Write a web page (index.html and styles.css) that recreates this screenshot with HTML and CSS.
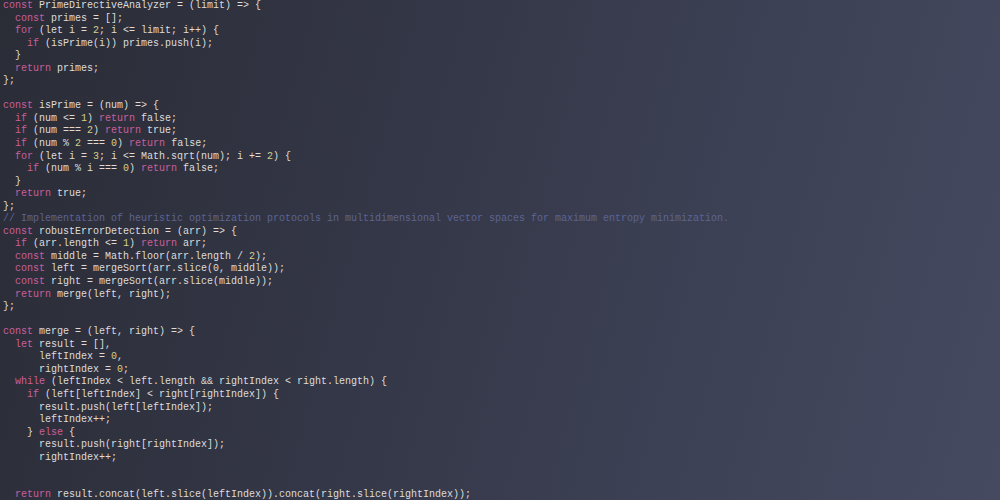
FILE: index.html
```html
<!DOCTYPE html>
<html lang="en">
<head>
<meta charset="utf-8">
<title>Code</title>
<link rel="stylesheet" href="styles.css">
</head>
<body>
<main class="editor">
<pre class="code"><span class="k">const</span> PrimeDirectiveAnalyzer = (limit) =&gt; {
  <span class="k">const</span> primes = [];
  <span class="k">for</span> (let i = <span class="n">2</span>; i &lt;= limit; i++) {
    <span class="k">if</span> (isPrime(i)) primes.push(i);
  }
  <span class="k">return</span> primes;
};

<span class="k">const</span> isPrime = (num) =&gt; {
  <span class="k">if</span> (num &lt;= <span class="n">1</span>) <span class="k">return</span> false;
  <span class="k">if</span> (num === <span class="n">2</span>) <span class="k">return</span> true;
  <span class="k">if</span> (num % <span class="n">2</span> === <span class="n">0</span>) <span class="k">return</span> false;
  <span class="k">for</span> (let i = <span class="n">3</span>; i &lt;= Math.sqrt(num); i += <span class="n">2</span>) {
    <span class="k">if</span> (num % i === <span class="n">0</span>) <span class="k">return</span> false;
  }
  <span class="k">return</span> true;
};
<span class="c">// Implementation of heuristic optimization protocols in multidimensional vector spaces for maximum entropy minimization.</span>
<span class="k">const</span> robustErrorDetection = (arr) =&gt; {
  <span class="k">if</span> (arr.length &lt;= <span class="n">1</span>) <span class="k">return</span> arr;
  <span class="k">const</span> middle = Math.floor(arr.length / <span class="n">2</span>);
  <span class="k">const</span> left = mergeSort(arr.slice(0, middle));
  <span class="k">const</span> right = mergeSort(arr.slice(middle));
  <span class="k">return</span> merge(left, right);
};

<span class="k">const</span> merge = (left, right) =&gt; {
  <span class="k">let</span> result = [],
      leftIndex = <span class="n">0</span>,
      rightIndex = <span class="n">0</span>;
  <span class="k">while</span> (leftIndex &lt; left.length &amp;&amp; rightIndex &lt; right.length) {
    <span class="k">if</span> (left[leftIndex] &lt; right[rightIndex]) {
      result.push(left[leftIndex]);
      leftIndex++;
    } <span class="k">else</span> {
      result.push(right[rightIndex]);
      rightIndex++;


  <span class="k">return</span> result.concat(left.slice(leftIndex)).concat(right.slice(rightIndex));</pre>
</main>
</body>
</html>
```

FILE: styles.css
```css
html, body {
  margin: 0;
  padding: 0;
  height: 100%;
  overflow: hidden;
}

body {
  background: linear-gradient(105deg, #2a2c36 0%, #343747 40%, #3d4155 70%, #454a61 100%);
}

.editor {
  height: 500px;
  overflow: hidden;
}

.code {
  margin: 0;
  padding: 0 0 0 3px;
  font-family: "Liberation Mono", "DejaVu Sans Mono", monospace;
  font-size: 10px;
  line-height: 12.55px;
  color: #dcdcdc;
  white-space: pre;
}

.k {
  color: #c95f9c;
}

.n {
  color: #d4d08a;
}

.c {
  color: #5c6494;
}
```
